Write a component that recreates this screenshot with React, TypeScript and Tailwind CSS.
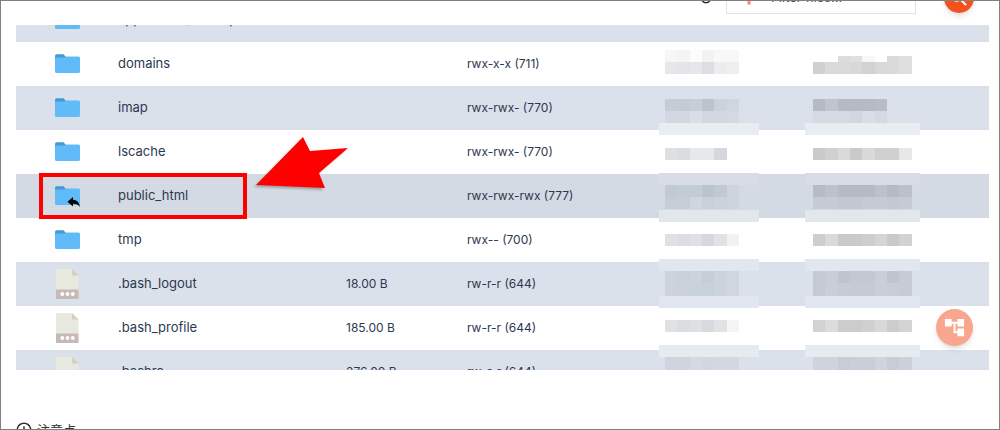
import { MdAccountTree, MdErrorOutline, MdFilterAlt, MdRefresh, MdSearch } from "react-icons/md"

type Band = { y: number; h?: number; colors: string[] }
type Mask = { strips?: { y: number; color: string }[]; owner: Band[]; group: Band[] }

type Entry = {
    name: string
    kind: 'folder' | 'link' | 'file'
    size?: string
    mode: string
    mask?: Mask
}

// Owner and group names are masked with colored blocks, y is relative to the row
const ENTRIES: Entry[] = [
    { name: 'application_backups', kind: 'folder', mode: 'rwx-- (700)' },
    {
        name: 'domains', kind: 'folder', mode: 'rwx-x-x (711)',
        mask: {
            owner: [
                { y: 8, colors: ['#f6f6f6', '#f4f4f4', '#fcfcfc', '#f2f2f2', '#f8f8f8', '#f8f8f8'] },
                { y: 20, colors: ['#e6e7e9', '#e4e5e8', '#e6e7ea', '#dcdee2', '#ececef', '#efefef'] },
            ],
            group: [
                { y: 14, h: 6, colors: ['#fff', '#fff', '#dcdcdc', '#e0e0e0', '#f7f7f7', '#fff', '#dadada', '#dedede'] },
                { y: 20, colors: ['#d0d0d0', '#dadada', '#dadada', '#d8d8d8', '#d2d2d2', '#d8d8d8', '#dadada', '#dedede'] },
            ],
        },
    },
    {
        name: 'imap', kind: 'folder', mode: 'rwx-rwx- (770)',
        mask: {
            strips: [{ y: 37, color: '#e9edf2' }],
            owner: [
                { y: 13, colors: ['#c5ccd6', '#c4cbd5', '#c7ced7', '#bbc3cd', '#cbd2dc', '#cfd6df'] },
                { y: 25, colors: ['#d1d8e1', '#d1d8e1', '#d8dfe7', '#d1d8e1', '#d1d8e1', '#d2d9e2'] },
            ],
            group: [
                { y: 13, colors: ['#b5bac4', '#bfc4ce', '#b5bac4', '#b5bac4', '#b5bac4', '#b7bcc6'] },
                { y: 25, colors: ['#d5dbe4', '#d5dbe4', '#d5dbe4', '#d1d7e0', '#d8dee7', '#d4dae3'] },
            ],
        },
    },
    {
        name: 'lscache', kind: 'folder', mode: 'rwx-rwx- (770)',
        mask: {
            owner: [{ y: 18, colors: ['#dedfe2', '#dadce0', '#e7e8ea', '#e7e8ea', '#d5d7dc'] }],
            group: [{ y: 18, colors: ['#cacaca', '#d0d0d0', '#dadada', '#cacaca', '#d9d9d9', '#d0d0d0', '#d0d0d0', '#e7e7e7'] }],
        },
    },
    {
        name: 'public_html', kind: 'link', mode: 'rwx-rwx-rwx (777)',
        mask: {
            strips: [{ y: -1, color: '#d7dce5' }, { y: 36, color: '#e2e7eb' }],
            owner: [
                { y: 11, colors: ['#c1c9d2', '#c3cbd4', '#c3cbd4', '#bbc4ce', '#c1c9d2', '#cdd4dd'] },
                { y: 23, colors: ['#c6cdd7', '#c6cdd7', '#cfd6df', '#c9d0da', '#cbd2db', '#cdd4dd'] },
            ],
            group: [
                { y: 11, colors: ['#b6bbc5', '#bcc1cb', '#b5bac4', '#b5bac4', '#b5bac4', '#bcc1cb', '#b5bac4', '#bbc0ca'] },
                { y: 23, colors: ['#c5cbd5', '#c5cbd5', '#c2c7d1', '#c2c7d1', '#c5cbd5', '#c5cbd5', '#c3c9d3', '#c5cbd5'] },
            ],
        },
    },
    {
        name: 'tmp', kind: 'folder', mode: 'rwx-- (700)',
        mask: {
            owner: [{ y: 16, colors: ['#e0e1e4', '#dbdde1', '#dfe0e3', '#d6d8dd', '#e1e2e5', '#f2f2f3'] }],
            group: [{ y: 16, colors: ['#cecece', '#dadada', '#cacaca', '#cacaca', '#cecece', '#d5d5d5', '#cacaca', '#d2d2d2'] }],
        },
    },
    {
        name: '.bash_logout', kind: 'file', size: '18.00 B', mode: 'rw-r-r (644)',
        mask: {
            strips: [{ y: -3, color: '#e1e6ef' }, { y: 34, color: '#e1e6ef' }],
            owner: [
                { y: 9, colors: ['#ccd3dd', '#c9d1db', '#ccd3dd', '#c5cdd7', '#cbd3dd', '#cfd6e0'] },
                { y: 21, h: 13, colors: ['#ccd3dd', '#cbd2dc', '#c9d1db', '#c9d1db', '#cbd3dd', '#cfd6e0'] },
            ],
            group: [
                { y: 9, colors: ['#c4c9d3', '#c8cdd7', '#bfc4ce', '#c3c8d2', '#c3c8d2', '#c9ced8', '#bfc4ce', '#c6cbd5'] },
                { y: 21, h: 13, colors: ['#c4c9d3', '#c9ced8', '#c6cbd5', '#c5cad4', '#c5cad4', '#c9ced8', '#c8cdd7', '#c6cbd5'] },
            ],
        },
    },
    {
        name: '.bash_profile', kind: 'file', size: '185.00 B', mode: 'rw-r-r (644)',
        mask: {
            owner: [{ y: 14, colors: ['#e0e1e4', '#dbdde1', '#dfe0e3', '#d8dadf', '#e1e2e5', '#f5f5f6'] }],
            group: [{ y: 14, colors: ['#d2d2d2', '#dcdcdc', '#cccccc', '#cccccc', '#d0d0d0', '#d8d8d8', '#cccccc', '#d4d4d4'] }],
        },
    },
    {
        name: '.bashrc', kind: 'file', size: '376.00 B', mode: 'rw-r-r (644)',
        mask: {
            strips: [{ y: -5, color: '#e6ebef' }],
            owner: [{ y: 7, h: 13, colors: ['#ced5df', '#ced5df', '#d3dae3', '#d0d7e1', '#d1d8e2', '#d1d8e2'] }],
            group: [{ y: 7, h: 13, colors: ['#ced3dd', '#ced3dd', '#c7ccd6', '#c9ced8', '#c9ced8', '#ced5dd', '#c7ccd6', '#cbd0da'] }],
        },
    },
]

const BLOCK = 12.33

function FolderIcon({ linked }: { linked?: boolean }) {
    return (
        <svg width="26" height="22" viewBox="0 0 26 22" aria-hidden="true">
            <path d="M0 7V3Q0 1.3 1.5 1.3H8.5L11 4V7Z" fill="#3f9bd3" />
            <path d="M0 5.3Q0 4.6 .8 4.6H9.5L11 3.6H23.5Q25 3.6 25 5.1V18.5Q25 20 23.5 20H1.5Q0 20 0 18.5Z" fill="#60bbf8" />
            {linked && (
                <path d="M12.5 16.7L18 12V14.7Q24 15 25 22Q22.5 18.7 18 18.8V21.5Z" fill="#000" />
            )}
        </svg>
    )
}

function FileIcon() {
    return (
        <svg width="26" height="30" viewBox="0 0 26 30" aria-hidden="true">
            <path d="M1 0H17L23.5 6.5V21H1Z" fill="#e7e8de" />
            <path d="M17 0L23.5 6.5H17Z" fill="#d1d1c0" />
            <path d="M1 20.5H23.5V30H1Z" fill="#c7b9b6" />
            <circle cx="7.3" cy="25" r="1.9" fill="#fff" />
            <circle cx="12.5" cy="25" r="1.9" fill="#fff" />
            <circle cx="17.8" cy="25" r="1.9" fill="#fff" />
        </svg>
    )
}

function Mosaic({ bands, strips = [], inset, width }: { bands: Band[]; strips?: Mask['strips']; inset: number; width: number }) {
    return (
        <svg className="absolute top-0 left-0 overflow-visible" width="120" height="44" shapeRendering="crispEdges" aria-hidden="true">
            {strips.map(s => (
                <rect key={s.y} x={-inset} y={s.y} width={width} height="12" fill={s.color} />
            ))}
            {bands.map(b => b.colors.map((c, i) => (
                <rect key={`${b.y}-${i}`} x={i * BLOCK} y={b.y} width={BLOCK} height={b.h ?? 12} fill={c} />
            )))}
        </svg>
    )
}

function Row({ entry }: { entry: Entry }) {
    const { name, kind, size, mode, mask } = entry
    return (
        <tr className={kind === 'link' ? "h-11 bg-[#d4dae3]" : "h-11 odd:bg-[#dbe1ea]"}>
            <td className="relative p-0 pl-[39px]">
                {kind === 'file' ? <FileIcon /> : <FolderIcon linked={kind === 'link'} />}
                {kind === 'link' && (
                    <div className="absolute -top-px left-[23px] h-[46px] w-52 border-4 border-[#fe0000]" />
                )}
            </td>
            <td className="p-0">{name}</td>
            <td className="p-0 text-xs">{size}</td>
            <td className="p-0 text-xs">{mode}</td>
            <td className="relative p-0">
                {mask && <Mosaic bands={mask.owner} strips={mask.strips} inset={6} width={100} />}
            </td>
            <td className="relative p-0">
                {mask && <Mosaic bands={mask.group} strips={mask.strips} inset={8} width={115} />}
            </td>
        </tr>
    )
}

export default function App() {
    return (
        <div className="h-screen overflow-hidden border border-[#808080] bg-white font-['Inter',sans-serif] text-[13px] text-[#2d3850]">
            <header className="-mt-[19px] flex h-8 items-center justify-end pr-[25px]">
                <button aria-label="Refresh" className="mr-3 text-[#14213a]">
                    <MdRefresh size={16} />
                </button>
                <label className="mr-7 flex h-8 w-[190px] items-center border border-[#e0e3ec] pl-3">
                    <MdFilterAlt size={20} className="text-[#f8927a]" aria-hidden="true" />
                    <input
                        type="text"
                        aria-label="Filter files"
                        placeholder="Filter files..."
                        className="ml-3 w-32 outline-none placeholder:text-[#4b5364]"
                    />
                </label>
                <button aria-label="Search" className="flex size-[30px] items-center justify-center rounded-full bg-[#f4511e] text-white shadow-md">
                    <MdSearch size={22} />
                </button>
            </header>

            <main className="relative mt-[11px] mr-2.5 ml-[15px] h-[345px] overflow-hidden">
                <table className="-mt-[27px] w-full table-fixed border-collapse text-left">
                    <colgroup>
                        <col className="w-[102px]" />
                        <col className="w-[228px]" />
                        <col className="w-[121px]" />
                        <col className="w-[198px]" />
                        <col className="w-[148px]" />
                        <col />
                    </colgroup>
                    <tbody>
                        {ENTRIES.map(e => <Row key={e.name} entry={e} />)}
                    </tbody>
                </table>

                {/* Callout arrow */}
                <svg
                    className="absolute top-[111px] left-[239px] drop-shadow-[-2px_2px_1px_rgba(0,0,0,0.25)]"
                    width="96" height="56" viewBox="0 0 96 56" aria-hidden="true"
                >
                    <path d="M1 49L48 1L55 15L93 12L64 37L70 52Z" fill="#fe0000" />
                </svg>

                <button aria-label="Show tree" className="absolute right-4 bottom-6 flex size-[37px] items-center justify-center rounded-full bg-[#f8a68d] text-white shadow-md">
                    <MdAccountTree size={23} />
                </button>
            </main>

            <h2 className="mt-[50px] ml-3.5 flex items-center gap-1 font-['Noto_Sans_CJK_JP',sans-serif] text-[#333]">
                <MdErrorOutline size={18} aria-hidden="true" />
                注意点
            </h2>
        </div>
    )
}
